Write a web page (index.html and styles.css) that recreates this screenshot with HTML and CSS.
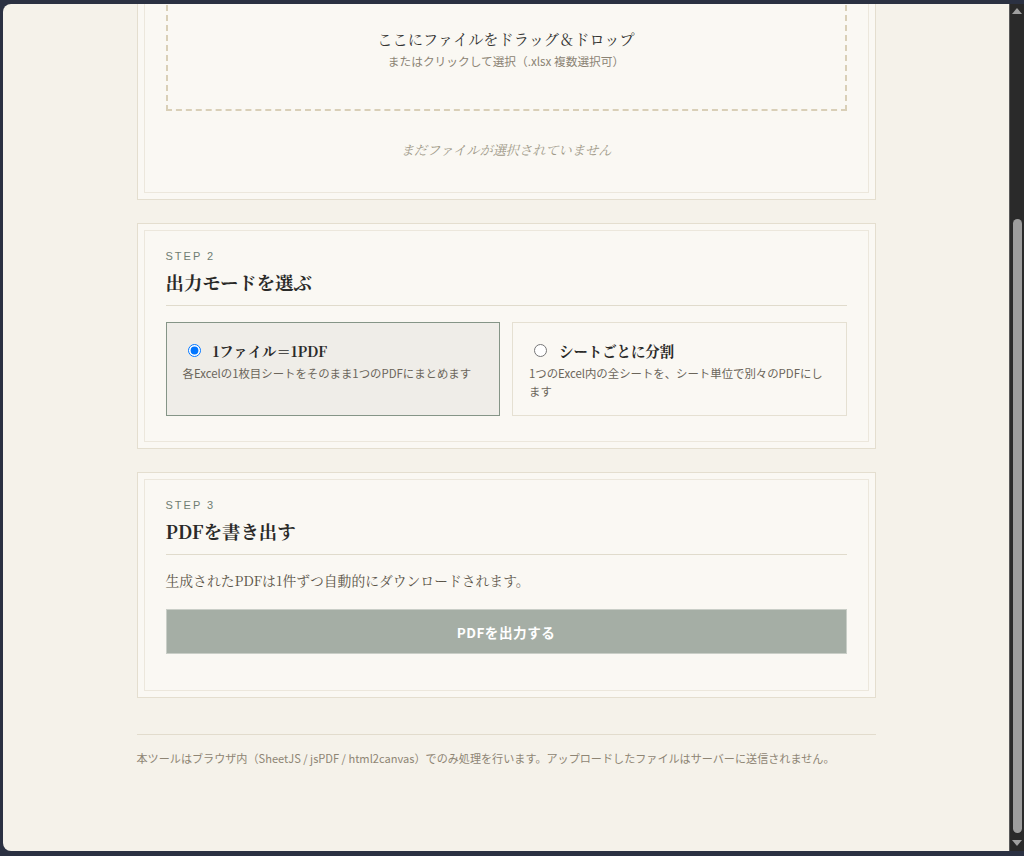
FILE: index.html
```html
<!DOCTYPE html>
<html lang="ja">
<head>
<meta charset="utf-8">
<title>Excel → PDF</title>
<link rel="stylesheet" href="styles.css">
</head>
<body>
<div class="window">
  <div class="viewport">
    <main class="page">
      <section class="card">
        <div class="card-inner">
          <div class="dropzone">
            <p class="drop-main">ここにファイルをドラッグ＆ドロップ</p>
            <p class="drop-sub">またはクリックして選択（.xlsx 複数選択可）</p>
          </div>
          <p class="no-file">まだファイルが選択されていません</p>
        </div>
      </section>

      <section class="card">
        <div class="card-inner card-inner--step2">
          <p class="step">STEP 2</p>
          <h2 class="card-title">出力モードを選ぶ</h2>
          <div class="modes">
            <label class="mode mode--active">
              <span class="mode-head"><input type="radio" name="mode" checked><span class="mode-name">1ファイル＝1PDF</span></span>
              <span class="mode-desc">各Excelの1枚目シートをそのまま1つのPDFにまとめます</span>
            </label>
            <label class="mode">
              <span class="mode-head"><input type="radio" name="mode"><span class="mode-name">シートごとに分割</span></span>
              <span class="mode-desc">1つのExcel内の全シートを、シート単位で別々のPDFにします</span>
            </label>
          </div>
        </div>
      </section>

      <section class="card">
        <div class="card-inner card-inner--step3">
          <p class="step">STEP 3</p>
          <h2 class="card-title">PDFを書き出す</h2>
          <p class="note">生成されたPDFは1件ずつ自動的にダウンロードされます。</p>
          <button class="export" type="button" disabled>PDFを出力する</button>
        </div>
      </section>

      <footer class="footer">
        <p>本ツールはブラウザ内（SheetJS / jsPDF / html2canvas）でのみ処理を行います。アップロードしたファイルはサーバーに送信されません。</p>
      </footer>
    </main>
  </div>
  <div class="scrollbar">
    <span class="sb-up"></span>
    <span class="sb-track"><span class="sb-thumb"></span></span>
    <span class="sb-down"></span>
  </div>
</div>
</body>
</html>
```

FILE: styles.css
```css
* { box-sizing: border-box; }

html, body { margin: 0; height: 100%; }

body {
  background: #2b3142;
  padding: 4px 0 5px 3px;
  font-family: "Noto Sans CJK JP", "Noto Sans", sans-serif;
}

.window {
  height: 847px;
  display: flex;
  border-radius: 8px 0 0 8px;
  overflow: hidden;
  background: #f5f2ea;
}

.viewport {
  flex: 1;
  display: flex;
  flex-direction: column;
  justify-content: flex-end;
  overflow: hidden;
  border-right: 1px solid #5a5a5a;
}

.page {
  width: 739px;
  margin: 0 auto;
  padding-bottom: 84px;
}

.card {
  border: 1px solid #e4decf;
  background: #faf8f3;
  padding: 6px;
  margin-bottom: 23px;
}

.card:last-of-type { margin-bottom: 0; }

.card-inner {
  border: 1px solid #ece7dc;
  padding: 18px 21px 30px;
}

.card-inner--step2 { padding-bottom: 25px; }
.card-inner--step3 { padding-bottom: 36px; }

.step {
  margin: 0;
  font-family: "Liberation Sans", "Noto Sans", sans-serif;
  font-size: 11px;
  line-height: 14px;
  letter-spacing: 2px;
  color: #6f7d72;
}

.card-title {
  margin: 6px 0 0;
  padding-bottom: 10px;
  border-bottom: 1px solid #e0dbcc;
  font-family: "Noto Serif CJK JP", "Noto Serif JP", "Liberation Serif", serif;
  font-size: 18.4px;
  line-height: 26px;
  font-weight: 700;
  color: #2a2a28;
}

.dropzone {
  margin-top: 16px;
  border: 2px dashed #d9cfb7;
  padding: 40px 20px 39px;
  text-align: center;
}

.drop-main {
  margin: 0;
  font-family: "Noto Serif CJK JP", "Noto Serif JP", "Liberation Serif", serif;
  font-size: 15.2px;
  line-height: 24px;
  color: #333331;
}

.drop-sub {
  margin: 1px 0 0;
  font-size: 11.7px;
  line-height: 18px;
  color: #8b8373;
}

.no-file {
  margin: 27px 0 0;
  text-align: center;
  font-family: "Noto Serif CJK JP", "Noto Serif JP", "Liberation Serif", serif;
  font-style: italic;
  font-size: 13.2px;
  line-height: 24px;
  color: #a09888;
}

.modes {
  margin-top: 16px;
  display: grid;
  grid-template-columns: 1fr 1fr;
  gap: 12px;
}

.mode {
  display: flex;
  flex-direction: column;
  border: 1px solid #e5e0d2;
  background: #faf8f3;
  padding: 15px 16px 15px;
}

.mode--active {
  border-color: #859587;
  background: #efede8;
}

.mode-head {
  display: flex;
  align-items: center;
  height: 24px;
}

.mode-head input {
  margin: 0 12px 0 5px;
  width: 13px;
  height: 13px;
}

.mode-name {
  font-family: "Noto Serif CJK JP", "Noto Serif JP", "Liberation Serif", serif;
  font-size: 14.4px;
  font-weight: 700;
  color: #2a2a28;
}

.mode-desc {
  margin-top: 2px;
  font-size: 11.4px;
  line-height: 18px;
  color: #6b655a;
}

.note {
  margin: 13px 0 0;
  font-family: "Noto Serif CJK JP", "Noto Serif JP", "Liberation Serif", serif;
  font-size: 13.8px;
  line-height: 24px;
  color: #5a5448;
}

.export {
  display: block;
  width: 100%;
  height: 45px;
  margin-top: 17px;
  border: 1px solid #c9cec7;
  background: #a5aea5;
  color: #ffffff;
  font-family: "Noto Sans CJK JP", "Noto Sans", sans-serif;
  font-size: 13.6px;
  font-weight: 700;
  letter-spacing: 0.5px;
}

.footer {
  margin-top: 36px;
  border-top: 1px solid #e2dccd;
  padding-top: 14px;
}

.footer p {
  margin: 0;
  font-size: 11.1px;
  line-height: 18px;
  color: #8e8574;
}

.scrollbar {
  width: 14px;
  background: #2a2a2a;
  display: flex;
  flex-direction: column;
  align-items: center;
  padding: 4px 0 5px;
}

.sb-up, .sb-down {
  width: 0;
  height: 0;
  border-left: 5px solid transparent;
  border-right: 5px solid transparent;
}

.sb-up { border-bottom: 6px solid #a0a0a0; }
.sb-down { border-top: 6px solid #a0a0a0; }

.sb-track {
  flex: 1;
  display: flex;
  flex-direction: column;
  justify-content: flex-end;
  padding: 6px 0 7px;
}

.sb-thumb {
  width: 9px;
  height: 614px;
  border-radius: 5px;
  background: #9d9d9d;
}
```
